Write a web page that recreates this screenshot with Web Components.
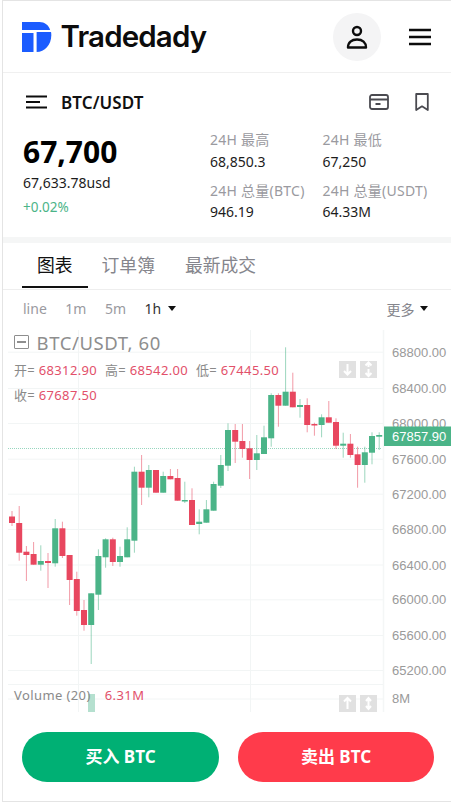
<!DOCTYPE html>
<html lang="zh">
<head>
<meta charset="utf-8">
<title>Tradedady</title>
<style>
  html, body { margin: 0; background: #fff; }
  body { font-family: "Noto Sans", "Noto Sans CJK SC", sans-serif; }
</style>
</head>
<body>
<trade-app>
  <trade-header></trade-header>
  <market-summary></market-summary>
  <tab-bar></tab-bar>
  <interval-bar></interval-bar>
  <kline-chart></kline-chart>
  <order-actions></order-actions>
</trade-app>

<script>
class TradeApp extends HTMLElement {
  constructor() {
    super();
    this.attachShadow({ mode: "open" });
    this.shadowRoot.innerHTML = `
    <style>
      :host {
        display: flex;
        flex-direction: column;
        box-sizing: border-box;
        height: 802px;
        margin-left: 2px;
        border-left: 1px solid #e4e4e4;
        border-top: 1px solid #e4e4e4;
        border-bottom: 1px solid #e4e4e4;
        overflow: hidden;
      }
    </style>
    <slot></slot>`;
  }
}

class TradeHeader extends HTMLElement {
  constructor() {
    super();
    this.attachShadow({ mode: "open" });
    this.shadowRoot.innerHTML = `
    <style>
      :host {
        display: flex;
        align-items: center;
        height: 71px;
        padding: 0 20px 0 19px;
        border-bottom: 1px solid #f0f0f0;
      }
      .logo { display: flex; align-items: center; gap: 8.5px; flex: 1; }
      .name {
        font: 600 29.5px/36px Inter, sans-serif;
        letter-spacing: -0.85px;
        color: #0c0c0c;
        position: relative;
        top: -1px;
      }
      .avatar {
        display: grid;
        place-items: center;
        width: 48px;
        height: 48px;
        border-radius: 50%;
        background: #f4f4f5;
        margin-right: 28px;
      }
      svg { display: block; }
    </style>
    <div class="logo">
      <svg width="30" height="30" viewBox="0 0 30 30" fill="#1b5cff">
        <path d="M0 0h17.5c5 0 9.3 3.2 10.6 8H0z"/>
        <rect x="0" y="11" width="11.5" height="19"/>
        <path d="M14.6 10h14.4c.2 1 .3 1.6.3 2.5v1C29.3 22.5 22.5 30 14.6 30z"/>
      </svg>
      <span class="name">Tradedady</span>
    </div>
    <div class="avatar">
      <svg width="22" height="24" viewBox="0 0 22 24" fill="none" stroke="#0c0c0c" stroke-width="2.4">
        <circle cx="11" cy="6" r="4"/>
        <path d="M2 22.5c0-5 3.5-8 9-8s9 3 9 8z" stroke-linejoin="round"/>
      </svg>
    </div>
    <svg width="22" height="18" viewBox="0 0 22 18" stroke="#0c0c0c" stroke-width="2.4">
      <path d="M0 2h22M0 9h22M0 16h22"/>
    </svg>`;
  }
}

class MarketSummary extends HTMLElement {
  constructor() {
    super();
    this.attachShadow({ mode: "open" });
    this.shadowRoot.innerHTML = `
    <style>
      :host {
        display: block;
        height: 164px;
        border-bottom: 6px solid #f5f6f6;
        color: #1c1c1c;
      }
      .symbol-row {
        display: flex;
        align-items: center;
        height: 58px;
        padding: 0 22px 0 23px;
      }
      .symbol { flex: 1; margin-left: 14px; font-size: 17px; font-weight: 600; letter-spacing: .1px; color: #111; }
      .card { margin-right: 26px; }
      .body { display: flex; padding: 0 0 0 20px; }
      .price { width: 187px; }
      .last { font-size: 30px; font-weight: 700; line-height: 36px; color: #000; margin-top: 3px; }
      .usd { font-size: 14px; line-height: 20px; margin-top: 3px; }
      .change { font-size: 13.5px; line-height: 20px; margin-top: 4px; color: #4bb488; }
      .stats {
        display: grid;
        grid-template-columns: 112.5px auto;
        grid-auto-rows: 21px;
        line-height: 21px;
        font-size: 14px;
        margin-top: -1px;
      }
      .stats span:nth-child(n+5) { position: relative; top: 8px; }
      .label { color: #9a9aa0; letter-spacing: .25px; position: relative; top: -1px; }
    </style>
    <div class="symbol-row">
      <svg width="21" height="14" viewBox="0 0 21 14" stroke="#0c0c0c" stroke-width="2">
        <path d="M0 1.5h21M0 7h14M0 12.5h21"/>
      </svg>
      <span class="symbol">BTC/USDT</span>
      <svg class="card" width="20" height="18" viewBox="0 0 20 18" fill="none" stroke="#4a4a50" stroke-width="1.8">
        <rect x="1" y="2" width="18" height="14" rx="2"/>
        <path d="M1 6.5h18M6.5 11h5"/>
      </svg>
      <svg width="14" height="18" viewBox="0 0 14 18" fill="none" stroke="#4a4a50" stroke-width="1.8">
        <path d="M1.2 1h11.6v16L7 13.3 1.2 17z" stroke-linejoin="round"/>
      </svg>
    </div>
    <div class="body">
      <div class="price">
        <div class="last">67,700</div>
        <div class="usd">67,633.78usd</div>
        <div class="change">+0.02%</div>
      </div>
      <div class="stats">
        <span class="label">24H 最高</span><span class="label">24H 最低</span>
        <span>68,850.3</span><span>67,250</span>
        <span class="label">24H 总量(BTC)</span><span class="label">24H 总量(USDT)</span>
        <span>946.19</span><span>64.33M</span>
      </div>
    </div>`;
  }
}

class TabBar extends HTMLElement {
  constructor() {
    super();
    this.attachShadow({ mode: "open" });
    this.shadowRoot.innerHTML = `
    <style>
      :host {
        display: flex;
        height: 46px;
        padding-left: 19px;
        border-bottom: 1px solid #eeeeee;
        font-size: 17.8px;
        color: #85858c;
      }
      .tab { padding: 0 15px; line-height: 44px; box-sizing: border-box; height: 46px; }
      .on { color: #111; border-bottom: 2px solid #111; margin-right: -1px; height: 45px; }
    </style>
    <div class="tab on">图表</div>
    <div class="tab">订单簿</div>
    <div class="tab">最新成交</div>`;
  }
}

class IntervalBar extends HTMLElement {
  constructor() {
    super();
    this.attachShadow({ mode: "open" });
    this.shadowRoot.innerHTML = `
    <style>
      :host {
        display: flex;
        align-items: center;
        gap: 18.5px;
        height: 37px;
        padding: 0 23px 0 20px;
        box-sizing: border-box;
        font-size: 14px;
        color: #9a9aa0;
      }
      .on { color: #333; display: flex; align-items: center; gap: 7px; }
      .more { margin-left: auto; display: flex; align-items: center; gap: 5.5px; color: #85858c; }
      i { display: block; border: 4px solid transparent; border-top: 5px solid #111; border-bottom: 0; }
    </style>
    <span>line</span>
    <span>1m</span>
    <span>5m</span>
    <span class="on">1h<i></i></span>
    <span class="more">更多<i></i></span>`;
  }
}

// [bodyTop, bodyBottom, wickTop, wickBottom, up]
const CANDLES = [
  [516.5,523,511,526,0],[523,552.7,506,560.7,0],[551.7,555,546,581,0],[554,564.7,542,564.7,0],
  [561,564.7,545.3,570.7,1],[561,563,553,588,0],[528.3,563.3,519,566.7,1],[528.3,556,521.7,558,0],
  [555,580,555,605,0],[579,611,571.7,615.7,0],[610,625,600,630.7,0],[593.3,625,593.3,664,1],
  [556,594.7,549.3,610,1],[539.3,557.3,538.3,567.7,1],[539.3,562,537.7,566,0],[556,562,546.7,566.7,1],
  [539.3,557.3,527.3,557.3,1],[471.7,540.7,466.7,552.7,1],[471.7,487.7,455,505,0],[470,487.7,465,497.3,1],
  [470,492.7,470,492.7,0],[476,492.7,471.7,492.7,1],[476,479.3,469,479.3,0],[478,500.7,469,500.7,0],
  [500,501.5,481.7,503,1],[500,525,488.3,525,0],[521.7,524,509.3,534.3,1],[509.3,522.7,500,522.7,1],
  [484,510.7,481.7,510.7,1],[465,485.7,455,488,1],[430,465.7,423.3,471,1],[430,441.7,424,463,0],
  [441,449,424,457.7,0],[448.3,460,441,479,0],[453.3,460,435,470,1],[437.3,454,425.7,454,1],
  [395,438.3,393.3,446.7,1],[395,405.7,393.3,426.7,0],[391.7,405.7,347.3,405.7,1],[391.7,407.3,372.7,407.3,0],
  [405,407,399,417.7,1],[405,425,398.3,432.3,0],[424,425,422.7,435.7,0],[417.3,425,414.3,437.3,1],
  [417.3,422.7,401,422.7,0],[422,445.7,418.3,449,0],[443.7,445.7,432.7,457.7,1],[443.7,455,434,457.7,0],
  [454.3,465,446.7,487.7,0],[452.3,465,446.7,482.7,1],[436,452.7,432.3,464.3,1],[435,436.7,432.3,450,1]
];
const PRICES = [
  ["68800.00",351.7],["68400.00",388],["68000.00",423],["67600.00",458.7],["67200.00",493.7],
  ["66800.00",529],["66400.00",564.5],["66000.00",599.3],["65600.00",635],["65200.00",670]
];

class KlineChart extends HTMLElement {
  constructor() {
    super();
    this.attachShadow({ mode: "open" });
  }

  static get styles() {
    return `
      :host { display: block; position: relative; height: 386px; flex: none; }
      svg { display: block; position: absolute; inset: 0; }
      text { font-family: "Liberation Sans", Arial, sans-serif; font-size: 13px; fill: #9a9a9a; }
      .tag { fill: #fff; }
      .legend {
        position: absolute;
        left: 11px;
        top: 0;
        color: #8a8a8a;
        font-size: 13px;
        letter-spacing: .33px;
      }
      .title {
        display: flex;
        align-items: center;
        gap: 7.5px;
        height: 30px;
        font-size: 18.5px;
        font-weight: 400;
        letter-spacing: .6px;
        color: #8e8e8e;
      }
      .box { display: block; box-sizing: border-box; width: 15px; height: 14px; border: 1.5px solid #8e8e8e; border-radius: 1px; position: relative; }
      .box::after { content: ""; position: absolute; left: 2px; right: 2px; top: 5px; height: 1.5px; background: #8e8e8e; }
      .ohlc { display: flex; gap: 8px; height: 25px; align-items: center; }
      b { font-weight: 400; color: #e2506a; }
      .volume { position: absolute; left: 11px; top: 359px; display: flex; gap: 14px; color: #8a8a8a; font-size: 13px; letter-spacing: .4px; }
    `;
  }

  connectedCallback() {
    this.render();
  }

  candles() {
    return CANDLES.map(([top, bottom, wickTop, wickBottom, up], i) => {
      const x = 12 + i * 7.2;
      const color = up ? "#4bb488" : "#e8475f";
      return `<rect x="${x - 0.5}" y="${wickTop}" width="1" height="${wickBottom - wickTop}" fill="${color}" opacity=".55"/>
        <rect x="${x - 3}" y="${top}" width="6" height="${Math.max(bottom - top, 1.5)}" fill="${color}"/>`;
    }).join("");
  }

  render() {
    const grid = "#f2f5f5";
    const hLines = PRICES.map(p => p[1]).concat([684, 698.5])
      .map(y => `<path d="M8 ${y + .5}H383" stroke="${grid}"/>`).join("");
    const labels = PRICES.map(([t, y]) => `<text x="392" y="${y + 5}">${t}</text>`).join("");
    this.shadowRoot.innerHTML = `
    <style>${KlineChart.styles}</style>
    <svg width="448" height="386" viewBox="3 327 448 386">
      ${hLines}
      <path d="M78.5 330V712M250.5 330V712" stroke="${grid}"/>
      <path d="M383.5 330V712" stroke="#f4f6f6" stroke-width="1.5"/>
      <path d="M8 448.5H381" stroke="#7fcdb0" stroke-dasharray="1 1" opacity=".8"/>
      ${this.candles()}
      <rect x="88" y="694" width="7" height="18" fill="#b5e0cf"/>
      ${labels}
      <text x="392" y="703">8M</text>
      <path d="M384 426.5h67v19.5h-67z" fill="#4bb488"/>
      <text class="tag" x="392" y="441">67857.90</text>
      <g fill="#e1e1e1">
        <rect x="339" y="361" width="17" height="17"/><rect x="360" y="361" width="17" height="17"/>
        <rect x="339" y="695" width="17" height="17"/><rect x="360" y="695" width="17" height="17"/>
      </g>
      <g fill="none" stroke="#fff" stroke-width="2">
        <path d="M347.5 364v10M344 371l3.5 3.5 3.5-3.5"/>
        <path d="M368.5 363v4M368.5 369v7M365.5 373l3 3 3-3M365.5 365.5l3-3 3 3"/>
        <path d="M347.5 698v11M344 701.5l3.5-3.5 3.5 3.5"/>
        <path d="M368.5 698v11M366 701l2.5-3 2.5 3M366 706l2.5 3 2.5-3"/>
      </g>
    </svg>
    <div class="legend">
      <div class="title"><span class="box"></span><span>BTC/USDT, 60</span></div>
      <div class="ohlc"><span>开= <b>68312.90</b></span><span>高= <b>68542.00</b></span><span>低= <b>67445.50</b></span></div>
      <div class="ohlc"><span>收= <b>67687.50</b></span></div>
    </div>
    <div class="volume"><span>Volume (20)</span><b>6.31M</b></div>`;
  }
}

class OrderActions extends HTMLElement {
  constructor() {
    super();
    this.attachShadow({ mode: "open" });
    this.shadowRoot.innerHTML = `
    <style>
      :host {
        display: grid;
        grid-template-columns: 197px 196px;
        gap: 19px;
        padding: 19px 0 0 19px;
      }
      div {
        height: 50px;
        line-height: 50px;
        border-radius: 25px;
        text-align: center;
        color: #fff;
        font-size: 17px;
        font-weight: 700;
      }
      .buy { background: #00b074; }
      .sell { background: #ff3b4b; }
    </style>
    <div class="buy">买入 BTC</div>
    <div class="sell">卖出 BTC</div>`;
  }
}

customElements.define("trade-app", TradeApp);
customElements.define("trade-header", TradeHeader);
customElements.define("market-summary", MarketSummary);
customElements.define("tab-bar", TabBar);
customElements.define("interval-bar", IntervalBar);
customElements.define("kline-chart", KlineChart);
customElements.define("order-actions", OrderActions);
</script>
</body>
</html>
